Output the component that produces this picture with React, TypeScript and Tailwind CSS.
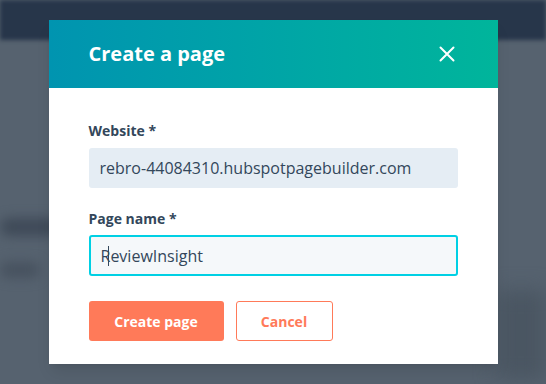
export default function App() {
  return (
    <div className="relative h-[384px] w-[546px] overflow-hidden bg-[#56626f] font-['Open_Sans',sans-serif] text-[#33475b]">
      {/* blurred page behind the modal */}
      <div className="absolute inset-x-0 top-0 h-[40px] bg-[#27364a] blur-[2px]" />
      <div className="absolute left-0 top-[218px] h-[18px] w-[60px] rounded-full bg-[#3f4a58] blur-[6px]" />
      <div className="absolute left-0 top-[262px] h-[16px] w-[40px] rounded-full bg-[#47525f] blur-[6px]" />
      <div className="absolute right-0 top-[290px] h-[90px] w-[50px] bg-[#4a5662] blur-[10px]" />

      <div className="relative flex justify-center pt-[20px]">
        <div className="w-[449px] bg-white shadow-lg">
          <div className="flex h-[68px] items-center justify-between bg-gradient-to-r from-[#0094b0] to-[#00b59b] pl-[40px] pr-[43px]">
            <h1 className="text-[20px] font-bold text-white">Create a page</h1>
            <svg width="16" height="16" viewBox="0 0 16 16" fill="none" stroke="white" strokeWidth="2" strokeLinecap="round">
              <path d="M1.5 1.5l13 13M14.5 1.5l-13 13" />
            </svg>
          </div>

          <div className="px-[40px] pb-[23px] pt-[34px]">
            <label className="block text-[14px] font-bold leading-[18px]">Website *</label>
            <div className="mt-[8px] flex h-[40px] items-center rounded-[3px] bg-[#e5edf4] px-[11px] text-[16px]">
              rebro-44084310.hubspotpagebuilder.com
            </div>

            <label className="mt-[22px] block text-[14px] font-bold leading-[18px]">Page name *</label>
            <div className="mt-[7px] flex h-[41px] items-center rounded-[3px] border-2 border-[#00d0e4] bg-[#f5f8fa] px-[10px] text-[16px]">
              <span>R</span>
              <span className="-ml-[2px] mr-[1px] h-[20px] w-px bg-[#33475b]" />
              <span>eviewInsight</span>
            </div>

            <div className="mt-[25px] flex gap-[12px]">
              <button className="h-[40px] w-[135px] rounded-[3px] bg-[#ff7a59] text-[14px] font-bold text-white">
                Create page
              </button>
              <button className="h-[40px] w-[97px] rounded-[3px] border border-[#ff7a59] bg-white text-[14px] font-bold text-[#ff7a59]">
                Cancel
              </button>
            </div>
          </div>
        </div>
      </div>
    </div>
  )
}
